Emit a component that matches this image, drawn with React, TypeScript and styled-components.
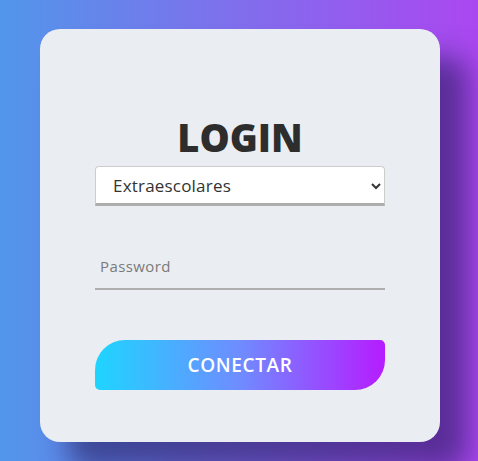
import React from 'react';
import styled, { createGlobalStyle } from 'styled-components';

const GlobalStyle = createGlobalStyle`
  * {
    box-sizing: border-box;
  }
  html, body {
    margin: 0;
    padding: 0;
    height: 100%;
  }
  body {
    font-family: 'Open Sans', 'Noto Sans', sans-serif;
  }
`;

const Page = styled.div`
  display: flex;
  justify-content: center;
  width: 100vw;
  height: 100vh;
  padding: 29px 0 0 2px;
  background: linear-gradient(90deg, #5196ea 0%, #7c72ec 45%, #ab47f0 100%);
  overflow: hidden;
`;

const Card = styled.form`
  display: flex;
  flex-direction: column;
  align-items: stretch;
  width: 400px;
  height: 413px;
  padding: 82px 55px 0;
  background: #eaedf1;
  border-radius: 20px;
  box-shadow: 28px 28px 28px rgba(30, 20, 80, 0.55);
`;

const Title = styled.h1`
  margin: 0 0 3px;
  text-align: center;
  font-family: 'Open Sans', sans-serif;
  font-weight: 800;
  font-size: 38px;
  line-height: 52px;
  color: #2d2d2d;
`;

const Select = styled.select`
  height: 40px;
  width: 100%;
  padding: 0 13px;
  font-family: 'Open Sans', sans-serif;
  font-size: 17px;
  letter-spacing: 0.2px;
  color: #333;
  background: #fff;
  border: 1px solid #ccc;
  border-bottom: 3px solid #aeaeae;
  border-radius: 4px 4px 0 0;
  outline: none;
`;

const Input = styled.input`
  margin-top: 44px;
  height: 40px;
  width: 100%;
  padding: 0 5px 6px;
  font-family: 'Open Sans', sans-serif;
  font-size: 15px;
  letter-spacing: 0.4px;
  color: #333;
  background: transparent;
  border: none;
  border-bottom: 2px solid #aeaeae;
  outline: none;
  &::placeholder {
    color: #7a7a7a;
  }
`;

const Button = styled.button`
  margin-top: 50px;
  height: 50px;
  width: 100%;
  border: none;
  border-radius: 30px 5px 30px 5px;
  background: linear-gradient(90deg, #1ed5ff 0%, #6f8cff 50%, #b61cff 100%);
  color: #fff;
  font-family: 'Open Sans', sans-serif;
  font-weight: 600;
  font-size: 19px;
  letter-spacing: 0.6px;
  cursor: pointer;
`;

export default function App() {
  return (
    <>
      <GlobalStyle />
      <Page>
        <Card onSubmit={e => e.preventDefault()}>
          <Title>LOGIN</Title>
          <Select defaultValue="extraescolares">
            <option value="extraescolares">Extraescolares</option>
          </Select>
          <Input type="password" placeholder="Password" />
          <Button type="submit">CONECTAR</Button>
        </Card>
      </Page>
    </>
  );
}
